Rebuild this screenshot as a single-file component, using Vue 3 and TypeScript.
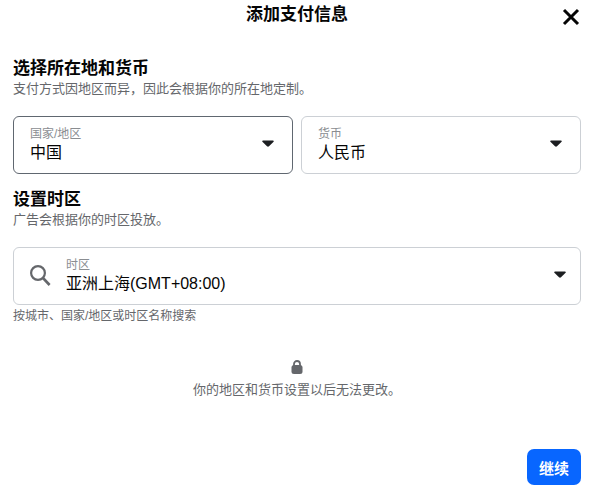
<script setup lang="ts">
const fields = [
  { label: '国家/地区', value: '中国', active: true },
  { label: '货币', value: '人民币', active: false },
]
</script>

<template>
  <div class="dialog">
    <header class="head">
      <h1 class="title">添加支付信息</h1>
      <button class="close" aria-label="关闭">
        <svg width="18" height="18" viewBox="0 0 18 18"><path d="M2 2 16 16M16 2 2 16" stroke="#050505" stroke-width="3" fill="none" /></svg>
      </button>
    </header>

    <section class="intro">
      <h2 class="heading">选择所在地和货币</h2>
      <p class="sub">支付方式因地区而异，因此会根据你的所在地定制。</p>
    </section>

    <div class="row">
      <div v-for="f in fields" :key="f.label" class="field" :class="{ active: f.active }">
        <div class="texts">
          <span class="label">{{ f.label }}</span>
          <span class="value">{{ f.value }}</span>
        </div>
        <svg class="caret" width="12" height="7" viewBox="0 0 12 7"><path d="M1 .5h10c.8 0 1 .8.6 1.2L7 6.3c-.5.5-1.5.5-2 0L.4 1.7C0 1.3.2.5 1 .5z" fill="#1c1e21" /></svg>
      </div>
    </div>

    <section class="tz-intro">
      <h2 class="heading">设置时区</h2>
      <p class="sub">广告会根据你的时区投放。</p>
    </section>

    <div class="field tz">
      <svg class="search" width="24" height="24" viewBox="0 0 24 24"><circle cx="8" cy="9" r="6.9" fill="none" stroke="#65676b" stroke-width="2.2" /><path d="M13 14 19.6 21" stroke="#65676b" stroke-width="2.6" /></svg>
      <div class="texts">
        <span class="label">时区</span>
        <span class="value">亚洲上海(GMT+08:00)</span>
      </div>
      <svg class="caret" width="12" height="7" viewBox="0 0 12 7"><path d="M1 .5h10c.8 0 1 .8.6 1.2L7 6.3c-.5.5-1.5.5-2 0L.4 1.7C0 1.3.2.5 1 .5z" fill="#1c1e21" /></svg>
    </div>
    <p class="hint">按城市、国家/地区或时区名称搜索</p>

    <div class="notice">
      <svg width="12" height="14" viewBox="0 0 12 14"><path d="M3 6V4a3 3 0 0 1 6 0v2" fill="none" stroke="#65676b" stroke-width="1.8" /><rect x="0.5" y="5" width="11" height="9" rx="2.5" fill="#65676b" /></svg>
      <p class="notice-text">你的地区和货币设置以后无法更改。</p>
    </div>

    <footer class="foot">
      <button class="primary">继续</button>
    </footer>
  </div>
</template>

<style scoped>
.dialog {
  width: 592px;
  height: 495px;
  box-sizing: border-box;
  padding: 0 11px 0 13px;
  display: flex;
  flex-direction: column;
  background: #fff;
  font-family: "Liberation Sans", "Noto Sans CJK SC", sans-serif;
  color: #050505;
  overflow: hidden;
}
.head {
  height: 58px;
  position: relative;
  flex: none;
}
.title {
  margin: 0;
  position: absolute;
  top: 3px;
  left: 233px;
  font-size: 17px;
  line-height: 24px;
  font-weight: 700;
}
.close {
  position: absolute;
  right: 1px;
  top: 8px;
  width: 18px;
  height: 18px;
  padding: 0;
  border: 0;
  background: none;
  display: block;
}
.close svg {
  display: block;
}
.heading {
  margin: 0;
  font-size: 17px;
  line-height: 22px;
  font-weight: 700;
}
.sub {
  margin: 1px 0 0;
  font-size: 13px;
  line-height: 16px;
  color: #65676b;
}
.intro {
  height: 58px;
  flex: none;
}
.row {
  display: grid;
  grid-template-columns: 280px 280px;
  gap: 8px;
}
.field {
  height: 58px;
  box-sizing: border-box;
  border: 1px solid #ccd0d5;
  border-radius: 6px;
  display: flex;
  align-items: center;
  padding: 0 18px 0 16px;
}
.field.active {
  border-color: #606770;
}
.texts {
  flex: 1;
  min-width: 0;
  display: flex;
  flex-direction: column;
}
.label {
  font-size: 12px;
  line-height: 14px;
  color: #8a8d91;
}
.value {
  font-size: 16px;
  line-height: 20px;
  margin-top: 2px;
  color: #050505;
}
.caret {
  flex: none;
  margin-top: -3px;
}
.tz-intro {
  height: 58px;
  margin-top: 15px;
  flex: none;
}
.tz {
  gap: 12px;
  padding-right: 14px;
}
.hint {
  margin: 3px 0 0;
  font-size: 12px;
  line-height: 16px;
  color: #65676b;
}
.notice {
  margin-top: 36px;
  display: flex;
  flex-direction: column;
  align-items: center;
  gap: 7px;
}
.notice-text {
  margin: 0;
  font-size: 13px;
  line-height: 18px;
  color: #65676b;
}
.foot {
  margin-top: auto;
  margin-bottom: 10px;
  display: flex;
  justify-content: flex-end;
}
.primary {
  width: 54px;
  height: 36px;
  border: 0;
  border-radius: 7px;
  background: #0866ff;
  color: #fff;
  font: 700 15px "Liberation Sans", "Noto Sans CJK SC", sans-serif;
  padding: 0;
}
</style>

<style>
html, body { margin: 0; background: #fff; }
</style>
